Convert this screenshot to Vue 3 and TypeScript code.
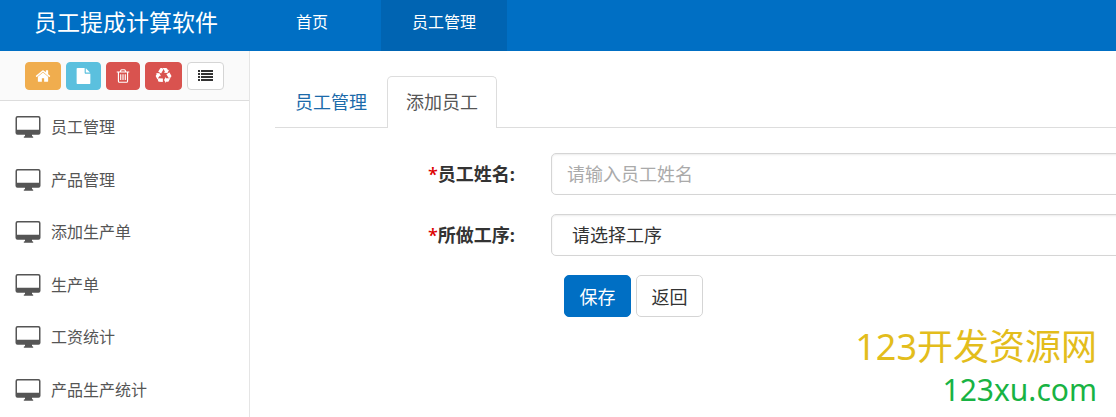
<script setup lang="ts">
import { ref } from 'vue'

interface Shortcut {
  label: string
  tone: string
  width: number
  viewBox: string
  path: string
}

const shortcuts: Shortcut[] = [
  {
    label: '首页',
    tone: 'warning',
    width: 16,
    viewBox: '0 0 1792 1792',
    path: 'M1472 992v480q0 26-19 45t-45 19h-384v-384h-256v384h-384q-26 0-45-19t-19-45v-480q0-1 .5-3t.5-3l575-474 575 474q1 2 1 6zm223-69l-62 74q-8 9-21 11h-3q-13 0-21-7l-692-577-692 577q-12 8-24 7-13-2-21-11l-62-74q-8-10-7-23.5t11-21.5l719-599q32-26 76-26t76 26l244 204v-195q0-14 9-23t23-9h192q14 0 23 9t9 23v408l219 182q10 8 11 21.5t-7 23.5z',
  },
  {
    label: '文件',
    tone: 'info',
    width: 15,
    viewBox: '56 0 1680 1792',
    path: 'M1152 512v-472q22 14 36 28l408 408q14 14 28 36h-472zm-128 32q0 40 28 68t68 28h544v1056q0 40-28 68t-68 28h-1344q-40 0-68-28t-28-68v-1600q0-40 28-68t68-28h800v544z',
  },
  {
    label: '删除',
    tone: 'danger',
    width: 14,
    viewBox: '112 0 1568 1792',
    path: 'M704 736v576q0 14-9 23t-23 9h-64q-14 0-23-9t-9-23v-576q0-14 9-23t23-9h64q14 0 23 9t9 23zm256 0v576q0 14-9 23t-23 9h-64q-14 0-23-9t-9-23v-576q0-14 9-23t23-9h64q14 0 23 9t9 23zm256 0v576q0 14-9 23t-23 9h-64q-14 0-23-9t-9-23v-576q0-14 9-23t23-9h64q14 0 23 9t9 23zm128 724v-948h-896v948q0 22 7 40.5t14.5 27 10.5 8.5h832q3 0 10.5-8.5t14.5-27 7-40.5zm-672-1076h448l-48-117q-7-9-17-11h-317q-10 2-17 11zm928 32v64q0 14-9 23t-23 9h-96v948q0 83-47 143.5t-113 60.5h-832q-66 0-113-58.5t-47-141.5v-952h-96q-14 0-23-9t-9-23v-64q0-14 9-23t23-9h309l70-167q15-37 54-63t79-26h320q40 0 79 26t54 63l70 167h309q14 0 23 9t9 23z',
  },
  {
    label: '回收',
    tone: 'danger',
    width: 17,
    viewBox: '0 0 1792 1792',
    path: 'M836 1169l-15 368-2 22-420-29q-36-3-67-31.5t-47-65.5q-11-27-14.5-55t4-65 12-55 21.5-64 19-53q78 12 509 28zm-387-586l180 379-147-92q-63 72-111.5 144.5t-72.5 125-39.5 94.5-18.5 63l-4 21-190-357q-17-26-18-56t6-47l8-18q35-63 114-188l-140-86zm1231 517l-188 359q-12 29-36.5 46.5t-43.5 20.5l-18 4q-71 7-219 12l8 164-230-367 211-362 7 173q170 16 283 5t170-33zm-785-924q-47 63-265 435l-317-187-19-12 225-356q20-31 60-45t80-10q24 2 48.5 12t42 21 41.5 33 36 34.5 36 39.5 32 35zm655 307l212 363q18 37 12.5 76t-27.5 74q-13 20-33 37t-38 28-48.5 22-47 16-51.5 14-46 12q-34-72-265-436l313-195zm-143-226l142-83-220 373-419-20 151-86q-34-89-75-166t-75.5-123.5-64.5-80-47-46.5l-17-13 405 1q31-3 58 10.5t39 28.5l11 15q39 61 112 190z',
  },
  {
    label: '列表',
    tone: 'plain',
    width: 17,
    viewBox: '0 0 17 16',
    path: 'M1 2h2v2H1zM4 2h12v2H4zM1 5h2v2H1zM4 5h12v2H4zM1 8h2v2H1zM4 8h12v2H4zM1 11h2v2H1zM4 11h12v2H4z',
  },
]

const menu: string[] = ['员工管理', '产品管理', '添加生产单', '生产单', '工资统计', '产品生产统计']
const employeeName = ref('')
const process = ref('')
</script>

<template>
  <div class="page">
    <header class="topbar">
      <h1 class="brand">员工提成计算软件</h1>
      <nav class="topnav">
        <a href="#">首页</a>
        <a href="#" class="active">员工管理</a>
      </nav>
    </header>
    <div class="body">
      <aside class="sidebar">
        <div class="shortcuts">
          <button v-for="s in shortcuts" :key="s.label" type="button" class="shortcut" :class="s.tone" :aria-label="s.label">
            <svg :width="s.width" height="16" :viewBox="s.viewBox" aria-hidden="true"><path :d="s.path" /></svg>
          </button>
        </div>
        <nav class="menu">
          <a v-for="item in menu" :key="item" href="#">
            <svg viewBox="0 0 26 22" aria-hidden="true">
              <path fill-rule="evenodd" d="M2.500 0h21a2 2 0 0 1 2 2v14.700a2 2 0 0 1-2 2h-6.500v1.600h.5a.7.7 0 0 1 .7.7v.7H8.800v-.7a.7.7 0 0 1 .7-.7h.5v-1.600H2.500a2 2 0 0 1-2-2V2a2 2 0 0 1 2-2zM2.800 1.500a.8.8 0 0 0-.8.8v11.500h22V2.300a.8.8 0 0 0-.8-.8z" />
            </svg>
            <span>{{ item }}</span>
          </a>
        </nav>
      </aside>
      <main class="content">
        <nav class="tabs">
          <a href="#">员工管理</a>
          <a href="#" class="current">添加员工</a>
        </nav>
        <form class="form" @submit.prevent>
          <label for="employee-name"><span class="required">*</span>员工姓名:</label>
          <input id="employee-name" v-model="employeeName" type="text" placeholder="请输入员工姓名">
          <label for="process"><span class="required">*</span>所做工序:</label>
          <select id="process" v-model="process">
            <option value="">请选择工序</option>
          </select>
          <div class="actions">
            <button type="submit" class="save">保存</button>
            <button type="button" class="back">返回</button>
          </div>
        </form>
      </main>
    </div>
    <div class="watermark">
      <p class="site">123开发资源网</p>
      <p class="domain">123xu.com</p>
    </div>
  </div>
</template>

<style>
body {
  margin: 0;
}
</style>

<style scoped>
.page {
  position: relative;
  display: flex;
  flex-direction: column;
  min-height: 100vh;
  overflow: hidden;
  background: #fff;
  color: #333;
  font-family: "Open Sans", "Noto Sans CJK SC", sans-serif;
  font-size: 16px;
}
.page * {
  box-sizing: border-box;
}
a {
  text-decoration: none;
}
button,
input,
select {
  font: inherit;
}
.topbar {
  display: flex;
  height: 51px;
  background: #006fc4;
  color: #fff;
}
.brand {
  width: 250px;
  margin: 0;
  padding-left: 34px;
  font-size: 23px;
  font-weight: 400;
  line-height: 44px;
  white-space: nowrap;
}
.topnav {
  display: flex;
}
.topnav a {
  padding: 0 31px;
  color: #fff;
  line-height: 44px;
}
.topnav a:first-child {
  padding: 0 53px 0 46px;
}
.topnav .active {
  background: #0064b2;
}
.body {
  display: flex;
  flex: 1;
}
.sidebar {
  flex: 0 0 250px;
  border-right: 1px solid #e5e5e5;
}
.shortcuts {
  display: flex;
  gap: 5px;
  height: 50px;
  padding: 11px 0 0 25px;
  border-bottom: 1px solid #ddd;
  background: #fafafa;
}
.shortcut {
  display: grid;
  place-items: center;
  height: 28px;
  padding: 0 9px;
  border: 1px solid transparent;
  border-radius: 4px;
  color: #fff;
}
.shortcut svg {
  fill: currentColor;
}
.warning {
  border-color: #f0ad4e;
  background: #f0ad4e;
}
.info {
  border-color: #5bc0de;
  background: #5bc0de;
}
.danger {
  border-color: #d9534f;
  background: #d9534f;
}
.plain {
  border-color: #d5d5d5;
  background: #fff;
  color: #333;
}
.menu {
  display: grid;
  grid-auto-rows: 1fr;
  height: 315px;
}
.menu a {
  display: flex;
  align-items: center;
  gap: 10px;
  padding-left: 15px;
  color: #555;
  line-height: 24px;
}
.menu svg {
  width: 26px;
  height: 22px;
  fill: #555;
}
.content {
  flex: 1;
  min-width: 0;
  padding: 25px 0 0 25px;
}
.tabs {
  display: flex;
  border-bottom: 1px solid #ddd;
  font-size: 18px;
  line-height: 50px;
}
.tabs a {
  margin-bottom: -1px;
  padding: 0 19px;
  border: 1px solid transparent;
  border-bottom: 0;
  color: #1b6aaa;
}
.tabs .current {
  padding: 0 18px 1px;
  border-color: #ddd;
  border-radius: 5px 5px 0 0;
  background: #fff;
  color: #555;
}
.form {
  display: grid;
  grid-template-columns: 240px 1fr;
  column-gap: 36px;
  row-gap: 19px;
  margin-right: -8px;
  padding-top: 25px;
  font-size: 18px;
}
.form label {
  font-weight: 700;
  line-height: 42px;
  text-align: right;
}
.required {
  color: #d00;
  font-weight: 600;
}
.form input,
.form select {
  width: 100%;
  height: 42px;
  padding: 0 15px;
  border: 1px solid #d5d5d5;
  border-radius: 5px;
  outline: 0;
  background: #fff;
  color: #333;
  box-shadow: inset 0 1px 2px rgba(0, 0, 0, 0.08);
}
.form select {
  padding-left: 20px;
  appearance: none;
}
.form input::placeholder {
  color: #aaa;
}
.actions {
  display: flex;
  grid-column: 2;
  gap: 5px;
  padding-left: 13px;
}
.actions button {
  width: 67px;
  height: 42px;
  padding: 0;
  border: 1px solid #d5d5d5;
  border-radius: 5px;
  background: #fff;
  color: #333;
}
.actions .save {
  border-color: #006fc4;
  background: #006fc4;
  color: #fff;
}
.watermark {
  position: absolute;
  right: 19px;
  bottom: 7px;
  font-family: "Noto Sans", "Noto Sans CJK SC", sans-serif;
  text-align: right;
}
.watermark p {
  margin: 0;
}
.site {
  color: #e3bd1c;
  font-size: 36px;
  line-height: 44px;
}
.domain {
  color: #18b343;
  font-size: 30px;
  line-height: 41px;
}
</style>
